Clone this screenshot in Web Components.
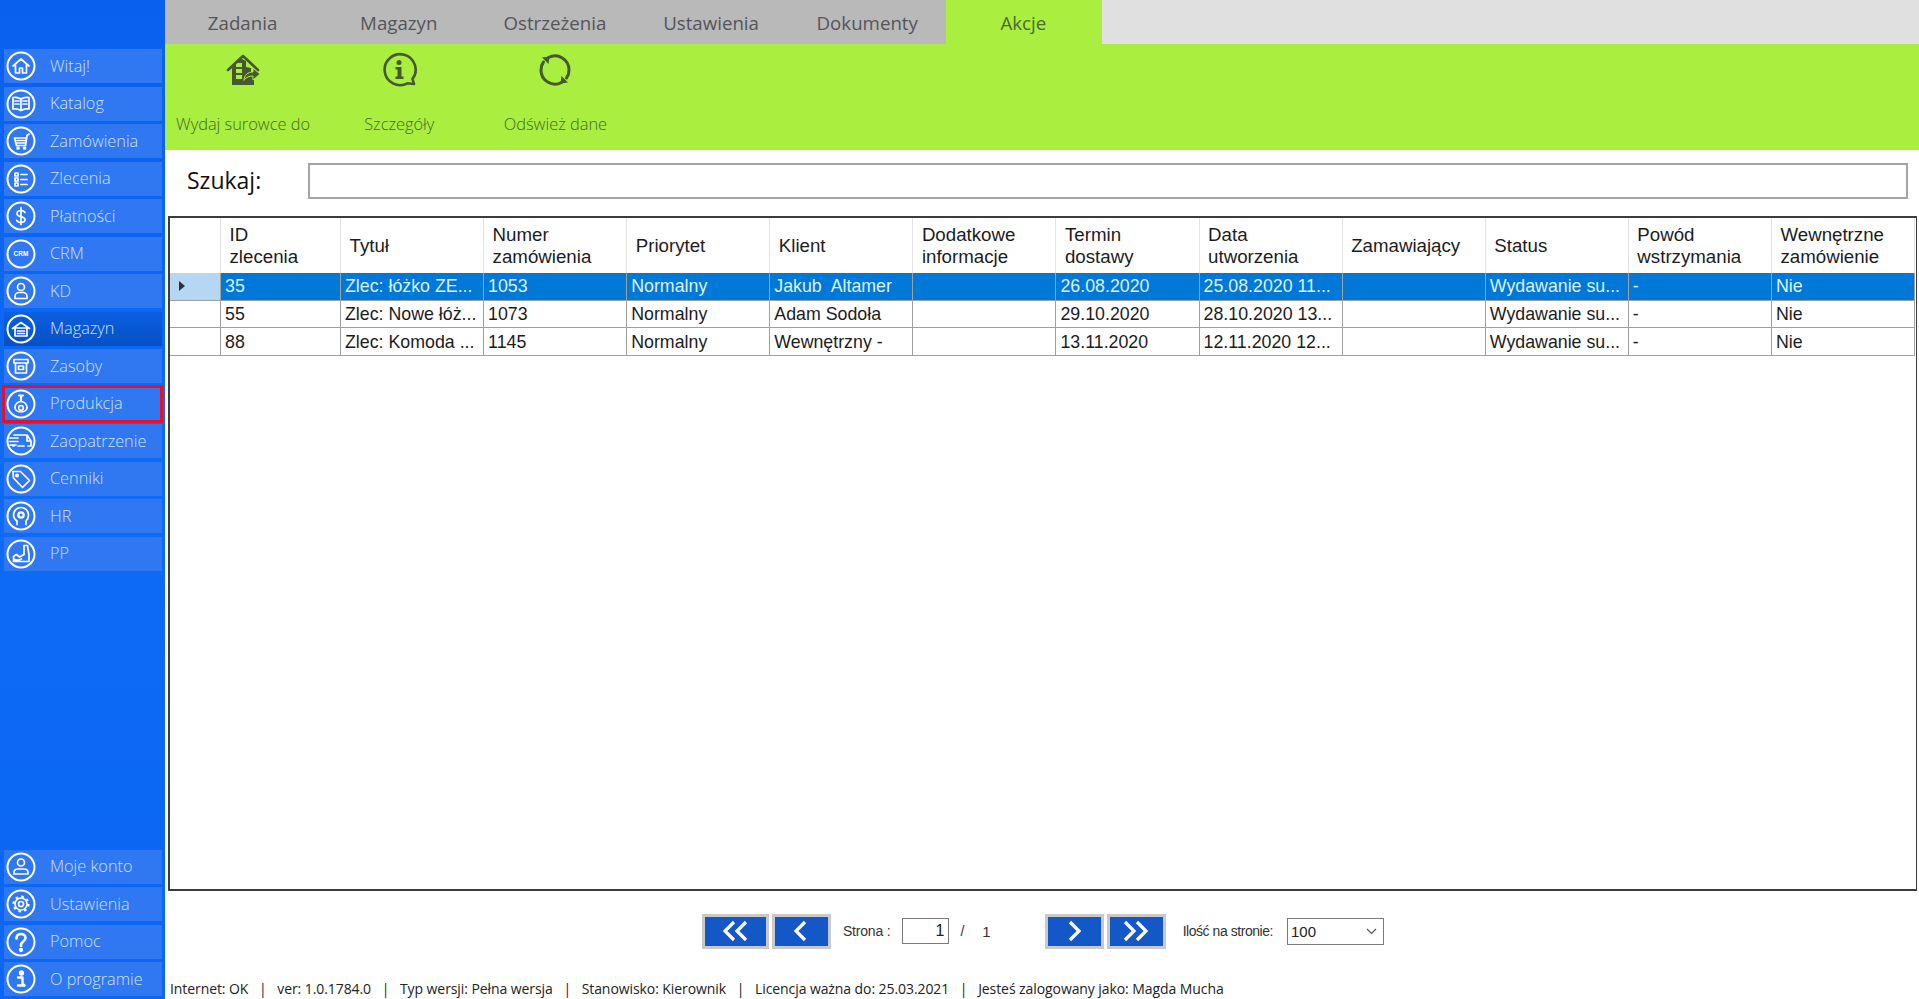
<!DOCTYPE html>
<html lang="pl">
<head>
<meta charset="utf-8">
<title>Akcje</title>
<style>
html, body { margin: 0; height: 100%; overflow: hidden; background: #fff; }
app-shell { height: 999px; }
</style>
</head>
<body>
<app-shell>
	<side-bar slot="side">
		<side-item icon="home">Witaj!</side-item>
		<side-item icon="book">Katalog</side-item>
		<side-item icon="cart">Zamówienia</side-item>
		<side-item icon="list">Zlecenia</side-item>
		<side-item icon="dollar">Płatności</side-item>
		<side-item icon="crm">CRM</side-item>
		<side-item icon="user">KD</side-item>
		<side-item icon="garage" active>Magazyn</side-item>
		<side-item icon="box">Zasoby</side-item>
		<side-item icon="robot" marked>Produkcja</side-item>
		<side-item icon="truck">Zaopatrzenie</side-item>
		<side-item icon="tag">Cenniki</side-item>
		<side-item icon="head">HR</side-item>
		<side-item icon="seat">PP</side-item>
		<side-item icon="account" class="push">Moje konto</side-item>
		<side-item icon="gear">Ustawienia</side-item>
		<side-item icon="help">Pomoc</side-item>
		<side-item icon="info">O programie</side-item>
	</side-bar>
	<tab-bar>
		<tab-item>Zadania</tab-item>
		<tab-item>Magazyn</tab-item>
		<tab-item>Ostrzeżenia</tab-item>
		<tab-item>Ustawienia</tab-item>
		<tab-item>Dokumenty</tab-item>
		<tab-item active>Akcje</tab-item>
	</tab-bar>
	<action-bar>
		<action-item icon="issue">Wydaj surowce do</action-item>
		<action-item icon="details">Szczegóły</action-item>
		<action-item icon="refresh">Odśwież dane</action-item>
	</action-bar>
	<search-box></search-box>
	<data-grid></data-grid>
	<pager-bar></pager-bar>
	<status-bar>Internet: OK &nbsp;&nbsp;|&nbsp;&nbsp; ver: 1.0.1784.0 &nbsp;&nbsp;|&nbsp;&nbsp; Typ wersji: Pełna wersja &nbsp;&nbsp;|&nbsp;&nbsp; Stanowisko: Kierownik &nbsp;&nbsp;|&nbsp;&nbsp; Licencja ważna do: 25.03.2021 &nbsp;&nbsp;|&nbsp;&nbsp; Jesteś zalogowany jako: Magda Mucha</status-bar>
</app-shell>

<script>
const sideIcons = {
	home: '<path d="M8 16l8-7 8 7M10.500 14.500V23h4v-5h3v5h4v-8.500"/>',
	book: '<path d="M16 11c-2-1.500-5-2-8-1.500V21c3-.5 6 0 8 1.500 2-1.500 5-2 8-1.500V9.500c-3-.5-6 0-8 1.500zM16 11v11M10 13h4M10 16h4M18 13h4M18 16h4"/>',
	cart: '<path d="M24 9l-2 1.500-1.500 10H11.500L9.500 13h11"/><path d="M12 15.500h8M12 18h8"/><circle cx="13" cy="23" r="1"/><circle cx="19.500" cy="23" r="1"/>',
	list: '<path d="M10 10h3v3h-3zM10 15h3v3h-3zM10 20h3v3h-3zM16 11.500h6M16 16.500h6M16 21.500h6"/>',
	dollar: '<path d="M20 12.500c-.8-1.500-2.300-2-4-2-2.300 0-4 1-4 3 0 4.500 8 2.200 8 6 0 2-1.800 3-4 3-1.900 0-3.500-.7-4.200-2.200M16 7.500v17"/>',
	crm: '<text x="16" y="18.300" text-anchor="middle" font-size="6.500" font-weight="700" font-family="Liberation Sans, sans-serif" fill="#fff" stroke="none">CRM</text>',
	user: '<circle cx="16" cy="12" r="3.500"/><path d="M10 23.500v-2c0-2.500 2-4 4-4h4c2 0 4 1.500 4 4v2z"/>',
	garage: '<path d="M7.500 15.500L16 9.500l8.500 6M10 15v8h12v-8z"/><path d="M12.500 18h7M12.500 20.500h7" />',
	box: '<path d="M9 9.500h14v3.500H9zM10.500 13v10h11V13z"/><path d="M13.500 16h5v3.500h-5z"/>',
	robot: '<path d="M14 7.500h4M16 7.500v5.500" stroke-width="2.200"/><path d="M10 19.500a6 6 0 0 1 12 0"/><circle cx="16" cy="20" r="2.300"/><path d="M10 19.500c0 2.500 2.500 4.500 6 4.500s6-2 6-4.500"/>',
	truck: '<path d="M9 10h13l4 6v5h-3M19 21h-6M9 21H8M22 10v6h4M5 13h8M5 16.500h8M5 20h6"/>',
	tag: '<path d="M8 8.500h7.500l9 9-7 7-9-9.500z"/><circle cx="12" cy="12.500" r="1.200"/>',
	head: '<path d="M12 24.500v-3.500c-2-1.500-3.500-3.500-3.500-6a7.500 7.500 0 0 1 15 0c0 3-1.500 5-2.500 6v3.500"/><circle cx="16" cy="15" r="3.800" fill="#fff" stroke="none"/><circle cx="16" cy="15" r="1.500" fill="#2f78f2" stroke="none"/>',
	seat: '<path d="M19 7.500h3.500l1.500 9.500v6.500H8.500v-5l3-2 3 2.500 4.500-2.500zM8.500 21c2.500 1.500 5.500 1.500 8 0"/>',
	account: '<circle cx="16" cy="11.500" r="3.500"/><path d="M9 23v-1.500c0-2.200 1.800-3.500 4-3.500h6c2.200 0 4 1.300 4 3.500V23z"/>',
	gear: '<circle cx="16" cy="16" r="6"/><circle cx="16" cy="16" r="7.500" stroke-width="2.200" stroke-dasharray="2.500 3.390" stroke-linecap="butt"/><circle cx="16" cy="16" r="2.500"/>',
	help: '<path d="M11.500 12.500c0-3 2-4.500 4.500-4.500s4.500 1.500 4.500 4c0 3.500-4.500 3.500-4.500 7v1" stroke-width="2.600"/><circle cx="16" cy="24" r="1.300" fill="#fff"/>',
	info: '<circle cx="16.500" cy="10" r="1.800" fill="#fff"/><path d="M13 14.500h4.500V22h1.700M13 22.500h6.500" stroke-width="2.400"/>'
};

const actionIcons = {
	issue: '<path d="M4 19L19 5l15 14" stroke-width="2.600" fill="none"/><path d="M8 17V34h22V21h-3v-4l-5-1V10l-6-3zM12 12h6v4h-6zM12 18h6v4h-6zM12 24h6v4h-6z" fill="#46582f" fill-rule="evenodd" stroke="none"/><path d="M20 29c0-5 4-8 9-8v-4l7 6-7 6v-4c-3 0-7 1-9 4z" fill="#46582f" stroke="#aaee40" stroke-width="1"/>',
	details: '<path d="M34 33l-1.500-5a15.500 15.500 0 1 0-5 4.300z" stroke-width="2.600" fill="none"/><circle cx="19" cy="11.500" r="2.500" fill="#46582f" stroke="none"/><path d="M15.500 16h6v9.500h2V28h-8v-2.500h2V18.500h-2z" fill="#46582f" stroke="none"/>',
	refresh: '<path d="M12.500 6.500A14 14 0 0 1 33 19c0 3-1 6-2.500 8M25.500 31.500A14 14 0 0 1 5 19c0-3 1-6 2.500-8" stroke-width="3" fill="none"/><path d="M6 6.500l7.500-1-1 7.500zM32 31.500l-7.500 1 1-7.500z" fill="#46582f" stroke="none"/>'
};

class AppShell extends HTMLElement {
	constructor() {
		super()
		this.attachShadow({mode: "open"})
		this.shadowRoot.innerHTML = `
		<style>
		:host {
			display: grid;
			grid-template-columns: 165px 1fr;
			width: 1919px;
			background: #fff;
		}
		.main {
			display: flex;
			flex-direction: column;
			min-width: 0;
		}
		</style>
		<slot name="side"></slot>
		<div class="main"><slot></slot></div>
		`
	}
}

class SideBar extends HTMLElement {
	constructor() {
		super()
		this.attachShadow({mode: "open"})
		this.shadowRoot.innerHTML = `
		<style>
		:host {
			display: flex;
			flex-direction: column;
			gap: 3.500px;
			padding: 49px 3px 3px 4px;
			box-sizing: border-box;
			height: 999px;
			background: linear-gradient(#0a60ee, #0d6bf6 50%, #0b66f2);
		}
		::slotted(.push) { margin-top: auto; }
		</style>
		<slot></slot>
		`
	}
}

class SideItem extends HTMLElement {
	constructor() {
		super()
		this.attachShadow({mode: "open"})
	}
	connectedCallback() {
		const glyph = sideIcons[this.getAttribute('icon')] || ''
		this.shadowRoot.innerHTML = `
		<style>
		:host {
			display: flex;
			align-items: center;
			gap: 13px;
			height: 34px;
			padding-left: 1px;
			background: #2f78f2;
			color: #cfe0ff;
			font: 300 16.300px/1 "Open Sans", sans-serif;
			white-space: nowrap;
			position: relative;
		}
		:host([active]) { background: linear-gradient(#0b5fe0, #0650c4); }
		:host([marked])::after {
			content: '';
			position: absolute;
			inset: -2px -1px -2px -2px;
			border: 3px solid #e2112e;
		}
		svg { width: 32px; height: 32px; flex: none; }
		</style>
		<svg viewBox="0 0 32 32" fill="none" stroke="#fff" stroke-width="1.700" stroke-linejoin="round" stroke-linecap="round">
			<circle cx="16" cy="16" r="13.500" stroke-width="2"/>
			${glyph}
		</svg>
		<slot></slot>
		`
	}
}

class TabBar extends HTMLElement {
	constructor() {
		super()
		this.attachShadow({mode: "open"})
		this.shadowRoot.innerHTML = `
		<style>
		:host {
			display: flex;
			height: 44px;
			background: #e0e0e0;
		}
		</style>
		<slot></slot>
		`
	}
}

class TabItem extends HTMLElement {
	constructor() {
		super()
		this.attachShadow({mode: "open"})
		this.shadowRoot.innerHTML = `
		<style>
		:host {
			display: flex;
			align-items: center;
			justify-content: center;
			width: 156.160px;
			padding: 2px 1px 0 0;
			box-sizing: border-box;
			background: #b9b9b9;
			color: #555559;
			font: 400 18.700px/1 "Open Sans", sans-serif;
		}
		:host([active]) { background: #aaee40; color: #4b6a2a; }
		</style>
		<slot></slot>
		`
	}
}

class ActionBar extends HTMLElement {
	constructor() {
		super()
		this.attachShadow({mode: "open"})
		this.shadowRoot.innerHTML = `
		<style>
		:host {
			display: flex;
			height: 106px;
			background: #aaee40;
		}
		</style>
		<slot></slot>
		`
	}
}

class ActionItem extends HTMLElement {
	constructor() {
		super()
		this.attachShadow({mode: "open"})
	}
	connectedCallback() {
		const glyph = actionIcons[this.getAttribute('icon')] || ''
		this.shadowRoot.innerHTML = `
		<style>
		:host {
			display: flex;
			flex-direction: column;
			align-items: center;
			width: 156.160px;
			padding-top: 7px;
			color: #426c24;
			font: 300 16.400px/1 "Open Sans", sans-serif;
			white-space: nowrap;
		}
		svg { width: 38px; height: 38px; margin-bottom: 27px; }
		</style>
		<svg viewBox="0 0 38 38" stroke="#46582f" stroke-linejoin="round" stroke-linecap="round">${glyph}</svg>
		<slot></slot>
		`
	}
}

class SearchBox extends HTMLElement {
	constructor() {
		super()
		this.attachShadow({mode: "open"})
		this.shadowRoot.innerHTML = `
		<style>
		:host {
			display: flex;
			align-items: center;
			height: 66px;
			box-sizing: border-box;
			padding: 0 11px 5px 22px;
			color: #111;
			font: 400 23px/1 "Open Sans", sans-serif;
		}
		label { width: 121px; flex: none; }
		input {
			flex: 1;
			height: 36px;
			box-sizing: border-box;
			border: 2px solid #a4a4a4;
			background: #fff;
			outline: none;
		}
		</style>
		<label for="search">Szukaj:</label>
		<input type="text" id="search">
		`
	}
}

const gridHead = [
	['ID', 'zlecenia'], ['Tytuł'], ['Numer', 'zamówienia'], ['Priorytet'], ['Klient'],
	['Dodatkowe', 'informacje'], ['Termin', 'dostawy'], ['Data', 'utworzenia'],
	['Zamawiający'], ['Status'], ['Powód', 'wstrzymania'], ['Wewnętrzne', 'zamówienie']
]

const gridRows = [
	['35', 'Zlec: łóżko ZE...', '1053', 'Normalny', 'Jakub  Altamer', '', '26.08.2020', '25.08.2020 11...', '', 'Wydawanie su...', '-', 'Nie'],
	['55', 'Zlec: Nowe łóż...', '1073', 'Normalny', 'Adam Sodoła', '', '29.10.2020', '28.10.2020 13...', '', 'Wydawanie su...', '-', 'Nie'],
	['88', 'Zlec: Komoda ...', '1145', 'Normalny', 'Wewnętrzny -', '', '13.11.2020', '12.11.2020 12...', '', 'Wydawanie su...', '-', 'Nie']
]

class DataGrid extends HTMLElement {
	constructor() {
		super()
		this.attachShadow({mode: "open"})
	}
	connectedCallback() {
		const head = gridHead.map(h => `<div class="th">${h.map(l => `<span>${l}</span>`).join('')}</div>`).join('')
		const rows = gridRows.map((r, i) => `
			<div class="rh ${i == 0 ? 'sel' : ''}">${i == 0 ? '<i></i>' : ''}</div>
			${r.map(c => `<div class="td ${i == 0 ? 'sel' : ''}">${c}</div>`).join('')}
		`).join('')
		this.shadowRoot.innerHTML = `
		<style>
		:host {
			display: block;
			height: 675px;
			margin: 0 2px 0 3px;
			box-sizing: border-box;
			border: 2px solid #3c3c3c;
			border-right-width: 1px;
			background: #fff;
			color: #1c1c1c;
			font: 400 17.800px/22px "Liberation Sans", sans-serif;
			overflow: hidden;
		}
		.grid {
			display: grid;
			grid-template-columns: 51px 120px repeat(11, 143.100px);
			grid-template-rows: 55px repeat(3, 27.700px);
		}
		.th, .corner {
			display: flex;
			flex-direction: column;
			justify-content: center;
			padding-left: 8.500px;
			border-right: 1px solid #e3e3e3;
			font-size: 18.700px;
			white-space: nowrap;
		}
		.corner { padding: 0; }
		.rh {
			display: flex;
			align-items: center;
			padding-left: 9px;
			border-right: 1px solid #a0a0a0;
			border-bottom: 1px solid #a0a0a0;
		}
		.rh.sel { background: #b5d7f3; }
		.rh i {
			width: 0;
			height: 0;
			border-left: 6px solid #303030;
			border-top: 5px solid transparent;
			border-bottom: 5px solid transparent;
		}
		.td {
			display: flex;
			align-items: center;
			padding-left: 4px;
			border-right: 1px solid #a0a0a0;
			border-bottom: 1px solid #a0a0a0;
			white-space: pre;
			overflow: hidden;
		}
		.td.sel { background: #0078d7; color: #dff0ff; }
		</style>
		<div class="grid">
			<div class="corner"></div>
			${head}
			${rows}
		</div>
		`
	}
}

class PagerBar extends HTMLElement {
	constructor() {
		super()
		this.attachShadow({mode: "open"})
		const chev = d => `<svg viewBox="0 0 40 24" fill="none" stroke="#fff" stroke-width="3.200" stroke-linejoin="miter"><path d="${d}"/></svg>`
		this.shadowRoot.innerHTML = `
		<style>
		:host {
			display: flex;
			align-items: center;
			justify-content: center;
			height: 80px;
			padding-left: 2px;
			box-sizing: border-box;
			color: #333;
			font: 400 14px/1 "Liberation Sans", sans-serif;
			white-space: nowrap;
		}
		button {
			display: flex;
			align-items: center;
			justify-content: center;
			height: 35px;
			box-sizing: border-box;
			padding: 0;
			border: 3px solid #c9c9c9;
			background: #1458c8;
		}
		button svg { width: 40px; height: 24px; }
		.wide { width: 67px; }
		.mid { width: 59px; }
		.page {
			width: 47px;
			height: 26px;
			box-sizing: border-box;
			border: 1px solid #7a7a7a;
			text-align: right;
			padding: 0 4px;
			font: 400 16px/1 "Liberation Sans", sans-serif;
			color: #222;
			background: #fff;
			margin: 0 11px 0 12px;
		}
		.select {
			display: flex;
			align-items: center;
			justify-content: space-between;
			width: 97px;
			height: 27px;
			box-sizing: border-box;
			border: 1px solid #7a7a7a;
			padding: 0 6px 0 3px;
			font-size: 15px;
			color: #222;
			margin-left: 14px;
		}
		.select svg { width: 11px; height: 7px; }
		.total { margin: 0 54px 0 18px; font-size: 15px; }
		.gap { width: 3px; flex: none; }
		.lead { margin-left: 12px; letter-spacing: -.2px; }
		.after { margin-left: 17px; letter-spacing: -.45px; }
		</style>
		<button class="wide" aria-label="Pierwsza">${chev('M19 3l-9 9 9 9M31 3l-9 9 9 9')}</button>
		<span class="gap"></span>
		<button class="mid" aria-label="Poprzednia">${chev('M24 3l-9 9 9 9')}</button>
		<span class="lead">Strona :</span>
		<input class="page" value="1">
		<span>/</span>
		<span class="total">1</span>
		<button class="mid" aria-label="Następna">${chev('M16 3l9 9-9 9')}</button>
		<span class="gap"></span>
		<button class="mid" aria-label="Ostatnia">${chev('M9 3l9 9-9 9M21 3l9 9-9 9')}</button>
		<span class="after">Ilość na stronie:</span>
		<div class="select"><span>100</span><svg viewBox="0 0 11 7" fill="none" stroke="#555" stroke-width="1.200"><path d="M1 1l4.500 4.500L10 1"/></svg></div>
		`
	}
}

class StatusBar extends HTMLElement {
	constructor() {
		super()
		this.attachShadow({mode: "open"})
		this.shadowRoot.innerHTML = `
		<style>
		:host {
			display: block;
			padding: 9px 0 0 5px;
			color: #222;
			font: 400 14px/18px "Open Sans", sans-serif;
			letter-spacing: -.08px;
			white-space: nowrap;
		}
		</style>
		<slot></slot>
		`
	}
}

customElements.define('app-shell', AppShell)
customElements.define('side-bar', SideBar)
customElements.define('side-item', SideItem)
customElements.define('tab-bar', TabBar)
customElements.define('tab-item', TabItem)
customElements.define('action-bar', ActionBar)
customElements.define('action-item', ActionItem)
customElements.define('search-box', SearchBox)
customElements.define('data-grid', DataGrid)
customElements.define('pager-bar', PagerBar)
customElements.define('status-bar', StatusBar)
</script>
</body>
</html>
